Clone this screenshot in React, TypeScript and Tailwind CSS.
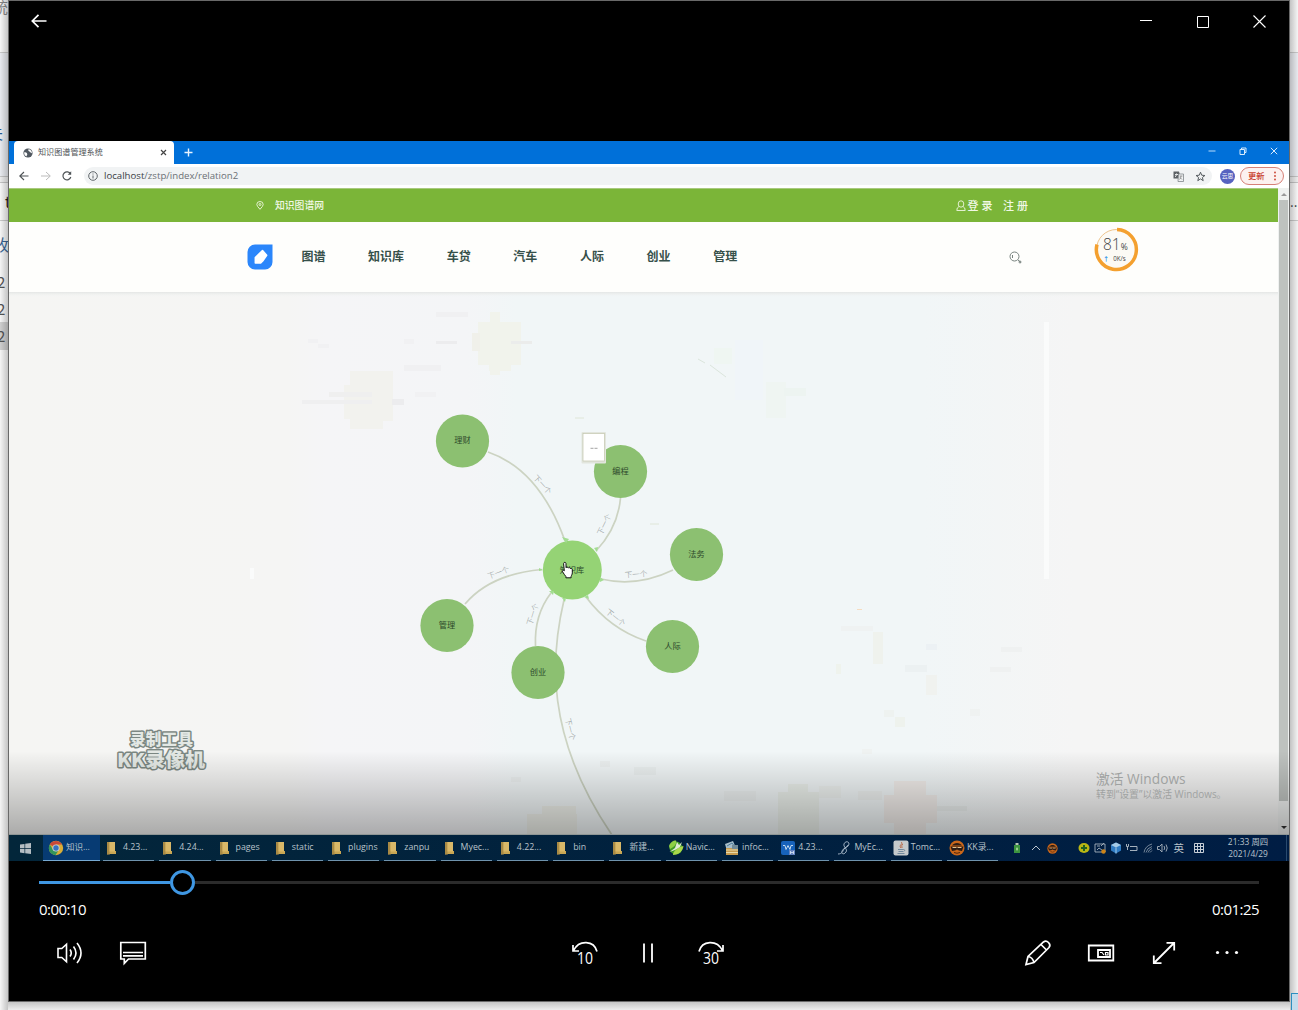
import React from 'react';

const cjk = "font-['Open_Sans','Noto_Sans_CJK_SC',sans-serif]";

const nodes = [
  { x: 462.5, y: 441, t: '理财' },
  { x: 620.5, y: 471.5, t: '编程' },
  { x: 696.5, y: 554.5, t: '法务' },
  { x: 672.5, y: 646.5, t: '人际' },
  { x: 538, y: 672.5, t: '创业' },
  { x: 447, y: 625.5, t: '管理' },
];

const edges = [
  'M488 452Q539.5 469.5 565 541',
  'M620.5 498Q618 527.5 596 551',
  'M673 570Q637 587.5 601 579',
  'M646 641Q610 629 586 597',
  'M535.5 646Q534 615 551 593',
  'M465 604Q490.5 574 542 569.5',
  'M564 600C551 655 544 735 612 835',
];

const edgeLabels = [
  { x: 543, y: 484, r: 48 },
  { x: 603.5, y: 524, r: -64 },
  { x: 498, y: 572, r: -20 },
  { x: 636, y: 573.5, r: -4 },
  { x: 616, y: 617, r: 38 },
  { x: 532, y: 614, r: -72 },
  { x: 571, y: 729, r: 76 },
];

const tints: [number, number, number, number, string][] = [
  [350, 371, 43, 50, '#f2f2ee'], [344, 385, 42, 34, '#f2f2ee'], [350, 419, 33, 10, '#f2f2ee'],
  [478, 322, 43, 43, '#f1f3ec'], [490, 312, 10, 63, '#f1f3ec'], [489, 355, 22, 16, '#f1f3ec'], [472, 333, 8, 18, '#f0f0ea'],
  [302, 400, 70, 4, '#efeff0'], [329, 392, 43, 5, '#efefef'], [392, 399, 12, 6, '#ececee'], [415, 392, 21, 5, '#f1f1f3'],
  [404, 365, 37, 6, '#f0f0f2'], [436, 312, 32, 5, '#f0f0f2'], [436, 341, 21, 3, '#ececee'], [404, 339, 10, 5, '#f1f1f3'],
  [308, 339, 10, 4, '#f1f1f3'], [318, 344, 11, 4, '#f1f1f3'], [511, 341, 21, 3, '#ebeceb'],
  [735, 340, 28, 60, '#f0f5f9'], [714, 348, 18, 16, '#eff6f2'], [766, 382, 20, 36, '#eff5f2'], [784, 388, 22, 8, '#edf4f1'],
  [841, 626, 32, 5, '#eff2f2'], [873, 632, 10, 32, '#eff2ed'], [926, 644, 11, 6, '#ecf1f4'], [905, 665, 22, 7, '#ecf1f2'],
  [926, 675, 11, 20, '#f0f2ef'], [990, 667, 21, 5, '#eff1f1'], [1001, 647, 21, 5, '#eff1f1'], [884, 710, 10, 7, '#eef2f0'], [895, 717, 10, 10, '#eef2ed'],
  [836, 664, 5, 10, '#eff3ed'], [970, 709, 10, 7, '#eff2f1'], [862, 749, 10, 5, '#eff2f1'],
  [778, 792, 41, 42, '#ebf0eb'], [788, 784, 20, 8, '#ebf0eb'], [894, 781, 32, 53, '#f1edea'], [884, 795, 53, 28, '#f1edea'],
  [634, 767, 22, 8, '#ebf0f0'], [724, 791, 32, 10, '#edf1f1'], [819, 786, 22, 12, '#eef2f0'], [542, 806, 34, 28, '#eef0ea'], [527, 814, 50, 20, '#eef0ea'],
  [511, 777, 10, 5, '#edf1f1'], [600, 761, 10, 6, '#ecf0f0'], [858, 791, 24, 9, '#eef1f0'], [937, 806, 30, 5, '#ebefee'],
];

function Graph() {
  return (
    <svg className="block h-[542px] w-[1269px]" viewBox="9 292 1269 542">
      <defs>
        <linearGradient id="canvas" x1="0" x2="1" y1="0" y2="0">
          <stop offset="0" stopColor="#f5f5f3" />
          <stop offset="0.22" stopColor="#f5f5f4" />
          <stop offset="0.25" stopColor="#f5f5f7" />
          <stop offset="0.36" stopColor="#f4f5f7" />
          <stop offset="0.4" stopColor="#f1f6f7" />
          <stop offset="0.72" stopColor="#f1f6f7" />
          <stop offset="0.84" stopColor="#f5f5f5" />
          <stop offset="1" stopColor="#f5f5f4" />
        </linearGradient>
        <linearGradient id="headShade" x1="0" x2="0" y1="0" y2="1">
          <stop offset="0" stopColor="#e4e6e5" />
          <stop offset="1" stopColor="#f3f5f4" stopOpacity="0" />
        </linearGradient>
      </defs>
      <rect x="9" y="292" width="1269" height="542" fill="url(#canvas)" />
      <rect x="9" y="292" width="1269" height="5" fill="url(#headShade)" />
      <rect x="1044" y="322" width="5" height="257" fill="#fafbfb" />
      <rect x="250" y="568" width="4" height="11" fill="#fafbfb" />
      {tints.map(([x, y, w, h, c], i) => (
        <rect key={i} x={x} y={y} width={w} height={h} fill={c} />
      ))}
      <path d="M698 359l7 4M710 365l16 12" stroke="#dbe5dc" strokeWidth="1" fill="none" />
      <path d="M575 418h9M650 524h9" stroke="#dfe6d8" strokeWidth="1" />
      <path d="M857 609.500h5" stroke="#f6dcc0" strokeWidth="1" />
      <g fill="none" stroke="#ccd3c2" strokeWidth="1.7">
        {edges.map((d) => <path key={d} d={d} />)}
      </g>
      {edgeLabels.map((l) => (
        <text key={l.r} transform={`translate(${l.x} ${l.y}) rotate(${l.r})`} textAnchor="middle" dominantBaseline="central" className="fill-[#858c8c] font-['Noto_Sans_CJK_SC',sans-serif] text-[7.5px] font-light">下一个</text>
      ))}
      {nodes.map((n) => (
        <g key={n.t}>
          <circle cx={n.x} cy={n.y} r="26.6" fill="#8cc071" />
          <text x={n.x} y={n.y + 2.4} textAnchor="middle" className="fill-[#2c4a2b] font-['Noto_Sans_CJK_SC',sans-serif] text-[8.2px]">{n.t}</text>
        </g>
      ))}
      <circle cx="572.3" cy="570" r="29.5" fill="#95d375" />
      <path d="M562 537l7 2-3 4zM594 548l4-1-1 5zM600 577l4 3-4 2zM584 597l4-2 1 4zM549 591l5 0-1 4zM562 598l4 0-1 4zM539 568l4 2-4 1z" fill="#a3dd92" />
      <text x="572" y="572.5" textAnchor="middle" className="fill-[#2c4a2b] font-['Noto_Sans_CJK_SC',sans-serif] text-[8.2px]">知识库</text>
      <path d="M563.6 563.6c0-1.7 2.4-1.700 2.400 0v4.200c.5-.9 2-.8 2.300.2.700-.7 1.900-.4 2.100.5.800-.3 1.900.1 1.900 1.200v3c0 2-.9 2.600-1.200 3.700v1.400h-5.200v-1.300c-.8-1.200-2.400-2.900-3.300-4.700-.6-1.300.7-2 1.700-1z" fill="#fff" stroke="#111" strokeWidth="1" />
      <rect x="581.500" y="432" width="24.500" height="31.500" fill="#e2e5dd" rx="1" />
      <rect x="583" y="433.500" width="21.500" height="27.500" fill="#fff" stroke="#c2c7ad" strokeWidth="0.7" />
      <path d="M590.500 448.300h3M594.500 448.300h3" stroke="#999" strokeWidth="0.9" />
      <g className="font-['Noto_Sans_CJK_SC',sans-serif] font-black" fill="#e3e8e4" stroke="#7b8782" strokeWidth="3" strokeLinejoin="round" style={{ paintOrder: 'stroke' }}>
        <text x="130" y="745" fontSize="15.5" textLength="63">录制工具</text>
        <text x="117" y="766.500" fontSize="19" textLength="88" lengthAdjust="spacingAndGlyphs">KK录像机</text>
      </g>
    </svg>
  );
}

const Folder = () => (
  <svg className="h-4 w-4" viewBox="0 0 16 16"><path d="M2 2h8v9h1v3H3v1l-1-1z" fill="#c9a653" /><path d="M2 2h2.500v13L2 14z" fill="#a98a45" /><path d="M4.500 2H10v9.500H4.500z" fill="#d9b868" /></svg>
);

const Chrome = () => (
  <svg className="h-4 w-4" viewBox="0 0 16 16"><circle cx="8" cy="8" r="7.2" fill="#d9ae37" /><path d="M8 8 1.800 4.400A7.200 7.200 0 0 1 14.200 4.600H8z" fill="#c8493b" /><path d="M1.800 4.400A7.200 7.200 0 0 0 7.500 15.200L11 9.500 8 11.400 5 9.700z" fill="#33955a" /><circle cx="8" cy="8" r="3.6" fill="#c9d2d6" /><circle cx="8" cy="8" r="2.7" fill="#3572c2" /></svg>
);

const Kk = ({ cls = 'h-4 w-4' }: { cls?: string }) => (
  <svg className={cls} viewBox="0 0 16 16"><circle cx="8" cy="8" r="7.5" fill="#c9661a" /><path d="M3 5.500C5 2 11 2 13 5.500z" fill="#2b1c15" /><path d="M1.500 6.500h13L13 11l-3-.5-2-1-2 1-3 .5z" fill="#2b1c15" /><path d="M3.500 7.500h4M8.500 7.500h4" stroke="#e8bf8a" /><path d="M5 12.500q3 1.500 6 0" stroke="#53260c" fill="none" /></svg>
);

const appIcons: Record<string, React.ReactNode> = {
  navicat: <svg className="h-4 w-4" viewBox="0 0 16 16"><circle cx="8" cy="8" r="6.5" fill="#3f9a25" /><path d="M1 6c1-3.500 4-5.500 7-5.500 1 3-1 6-6 8.500z" fill="#8fcf45" /><path d="M5 15c0-4 5-8 10.500-9-.5 5-5 9-10.500 9z" fill="#a9d84a" /><path d="M1.500 12 7 8l2-6 2 3 3-3-2 5-5 3z" fill="#e0ead5" /></svg>,
  infoc: <svg className="h-4 w-4" viewBox="0 0 16 16"><path d="M1 4 9 1l3 7-9 3z" fill="#a7bdca" /><path d="m3 6 5-3 3 4" stroke="#4c7a99" fill="none" /><path d="M2 8h12v7H2z" fill="#c79b51" /><path d="M2 10h12M2 12.500h12" stroke="#e8d8a6" /><path d="M8 5h6v4H8z" fill="#738b98" /></svg>,
  wps: <svg className="h-4 w-4" viewBox="0 0 16 16"><rect x="1" y="1" width="14" height="14" rx="2" fill="#1762bb" /><path d="M3 5.500h2l1 4 2-4 2 4 1-4h2" stroke="#bfd7ee" fill="none" /><path d="M9 10h6v5H9z" fill="#6683bf" /><path d="M10.500 11v3M13.500 11v3M10.500 12.500h3" stroke="#d9e4f3" strokeWidth=".8" /></svg>,
  myec: <svg className="h-4 w-4" viewBox="0 0 16 16"><path d="M2 14c4 0 5-3 6-5s5-2 5-5-4-3-5 0 4 5 2 8-5 2-4-1 5-3 6-6" stroke="#aebdcd" strokeWidth=".9" fill="none" /></svg>,
  tomc: <svg className="h-4 w-4" viewBox="0 0 16 16"><rect x=".5" y=".5" width="15" height="15" rx="2" fill="#c5c9cb" /><path d="M8 2c3 2-3 3 0 6M10 4c-2 1-1 2-1 4" stroke="#b86b4b" fill="none" /><path d="M5 9.500h5.500c2 0 1 2 0 2M5.500 11.500h4.500M4.500 13.500h7" stroke="#5d7890" strokeWidth=".8" fill="none" /></svg>,
  kk: <Kk />,
};

const tasks: [string, string][] = [
  ['', '4.23...'], ['', '4.24...'], ['', 'pages'], ['', 'static'], ['', 'plugins'], ['', 'zanpu'], ['', 'Myec...'], ['', '4.22...'], ['', 'bin'], ['', '新建...'],
  ['navicat', 'Navic...'], ['infoc', 'infoc...'], ['wps', '4.23...'], ['myec', 'MyEc...'], ['tomc', 'Tomc...'], ['kk', 'KK录...'],
];

function Taskbar() {
  return (
    <div className={`flex h-[26px] items-stretch bg-gradient-to-r from-[#03263a] via-[#01213e] to-[#001d44] text-[8.8px] text-[#b9c3cb] ${cjk}`}>
      <div className="flex w-[34px] items-center pl-[11px]">
        <svg className="h-[11px] w-[11px]" viewBox="0 0 11 11" fill="#b5bdc2"><path d="M0 1.500 4.500.9v4.300H0zM5.200.8 11 0v5.200H5.200zM0 5.900h4.500v4.300L0 9.600zM5.200 5.900H11V11l-5.800-.8z" /></svg>
      </div>
      <div className="mr-[3px] flex w-[57px] items-center border-b border-[#76a9d2] bg-[#073b73] pl-[5px]"><Chrome /><span className="ml-[2px] text-[8.5px]">知识...</span></div>
      {tasks.map(([icon, label], i) => (
        <div key={i} className="mr-[4.97px] flex w-[51.3px] shrink-0 items-center whitespace-nowrap border-b border-[#6f93ad] pl-[2px]">
          {icon ? appIcons[icon] : <Folder />}
          <span className="ml-[2px] leading-none">{label}</span>
        </div>
      ))}
      <div className="ml-[6px] flex items-center">
        <svg className="h-3 w-4" viewBox="0 0 16 12"><path d="M5 3h6v8H5z" fill="#3d9440" /><path d="M6.500 1h3v2h-3z" fill="#b9c6b5" /><path d="m7 7 1-2 1 2-1 2z" fill="#b6e29e" /></svg>
        <svg className="ml-[3px] h-3 w-4" viewBox="0 0 16 12"><path d="m4 8 4-4 4 4" stroke="#bcc4ce" fill="none" /></svg>
        <div className="flex w-4 justify-center"><Kk cls="h-[11px] w-[11px]" /></div>
        <svg className="ml-[16px] h-3 w-4" viewBox="0 0 16 12"><ellipse cx="8" cy="6" rx="5.5" ry="5" fill="#b9b714" /><path d="M8 3v6M5 6h6" stroke="#236320" strokeWidth="2" /></svg>
        <svg className="h-3 w-4" viewBox="0 0 16 12"><path d="M3 2h10v8H3zM5 4h3M5 8l2-2 3 2M9 4l3-3" stroke="#b9c3cb" strokeWidth=".8" fill="none" /><circle cx="11.500" cy="9.500" r="2.2" fill="#cd8418" /></svg>
        <svg className="h-3 w-4" viewBox="0 0 16 12"><path d="m8 .5 5 2.500v5.500L8 11.500 3 8.500V3z" fill="#2f7cc4" /><path d="m3 3 5 2.500L13 3 8 .5z" fill="#a4cbe8" /><path d="M8 5.500v6" stroke="#a4cbe8" /></svg>
        <svg className="h-3 w-4" viewBox="0 0 16 12" stroke="#a4b0bc" fill="none"><path d="M6 4.500h7v4H6M2.500 2v2.500h2V2M3.500 5v3" /></svg>
        <svg className="h-3 w-4" viewBox="0 0 16 12" stroke="#7e8ea0" strokeWidth=".9" fill="none"><path d="M4 10.500q1-6.500 8-8.500M6 10.500q1-4.500 6-6M8 10.500q1-3 4-4M10 10.500l2-2" /></svg>
        <svg className="-ml-px h-3 w-4" viewBox="0 0 16 12" stroke="#9aa6b3" fill="none"><path d="M2.500 4.500h2L7 2v8L4.500 7.500h-2zM9 4q1.500 2 0 4M11 2.500q2.500 3.500 0 7" /></svg>
        <span className="w-[15px] text-center text-[10.5px] leading-none">英</span>
        <svg className="ml-[5px] h-3 w-4" viewBox="0 0 16 12" stroke="#c5cdd5" fill="none"><path d="M3.500 1.500h9v9h-9zM3.500 4.500h9M3.500 7.500h9M6.500 1.500v9M9.500 1.500v9" /></svg>
      </div>
      <div className="ml-auto mr-[14px] flex w-[48px] flex-col items-center justify-center whitespace-nowrap pb-px text-[8.4px] leading-[11.5px]"><span>21:33 周四</span><span>2021/4/29</span></div>
      <div className="w-[3px] border-l border-[#294a6e]" />
    </div>
  );
}

function BrowserChrome() {
  return (
    <div className={cjk}>
      <div className="flex h-[23px] bg-[#0070d9] pl-[5px]">
        <div className="flex w-[160px] items-center rounded-t-[4px] bg-white pl-[9px] pr-[7px]">
          <svg className="h-[10px] w-[10px]" viewBox="0 0 10 10"><circle cx="5" cy="5" r="4.6" fill="#515961" /><path d="M1 4.500q2-.5 3 .8T3.200 8.500Q1 7 1 4.500zM5.500 1.300q-.8 1.700.5 2T8.200 5.200L9 4.500Q8.300 1.500 5.500 1.300z" fill="#fff" /></svg>
          <span className="ml-[5px] text-[8.1px] text-[#4d5256]">知识图谱管理系统</span>
          <svg className="ml-auto h-[7px] w-[7px]" viewBox="0 0 7 7"><path d="m1 1 5 5M6 1 1 6" stroke="#444" strokeWidth="1.2" /></svg>
        </div>
        <svg className="ml-[10px] mt-[7px] h-[9px] w-[9px]" viewBox="0 0 9 9"><path d="M4.500.5v8M.5 4.500h8" stroke="#e8f3ff" strokeWidth="1.4" /></svg>
        <div className="ml-auto mr-[11px] flex items-center gap-[23px] pb-[4px]">
          <svg className="h-2 w-2" viewBox="0 0 8 8"><path d="M.5 4h7" stroke="#b9dcfb" /></svg>
          <svg className="h-2 w-2" viewBox="0 0 8 8" fill="none" stroke="#d9ecfd"><path d="M1 2.500h4.500v5H1zM2.500 2.500V1H7v4.500H5.500" /></svg>
          <svg className="h-2 w-2" viewBox="0 0 8 8"><path d="m.8.8 6.400 6.400M7.200.8.8 7.200" stroke="#d9ecfd" /></svg>
        </div>
      </div>
      <div className="flex h-[24px] items-center bg-white pl-[9px] pr-[5px]">
        <svg className="h-3 w-3" viewBox="0 0 12 12" fill="none" stroke="#4e5356" strokeWidth="1.1"><path d="M10.500 6H1.800M6 2 1.800 6 6 10" /></svg>
        <svg className="ml-[10px] h-3 w-3" viewBox="0 0 12 12" fill="none" stroke="#bbb"><path d="M1 6h9M6 2l4.300 4L6 10" /></svg>
        <svg className="ml-[9px] h-3 w-3" viewBox="0 0 12 12" fill="none" stroke="#4e5356" strokeWidth="1.2"><path d="M9.500 4A4 4 0 1 0 9.800 7" /><path d="M10.200 1.200v3.500H6.700z" fill="#4e5356" stroke="none" /></svg>
        <div className="ml-[11px] flex h-[18px] w-[1128px] items-center rounded-full bg-[#f1f3f4] pl-[4px] pr-[6px]">
          <svg className="h-[10px] w-[10px]" viewBox="0 0 10 10" fill="none" stroke="#60666a"><circle cx="5" cy="5" r="4.3" /><path d="M5 4.500v3M5 2.500v1" /></svg>
          <span className="ml-[6px] text-[9.65px] leading-none text-[#6b7074]"><span className="text-[#3b4044]">localhost</span>/zstp/index/relation2</span>
          <svg className="ml-auto h-[11px] w-[11px]" viewBox="0 0 11 11"><path d="M.5.500h5.500l2 7H.5z" fill="#5c6165" /><path d="M5.500 3h5v7.500H5z" fill="#f1f3f4" stroke="#82878a" strokeWidth=".8" /><path d="M2 3.500h3M3.500 2.500v1Q3 5.500 2 6" stroke="#e7e8e8" fill="none" /><path d="M6.500 5h3M8 5q0 2-1.500 3.500M7 6.500l2 2" stroke="#777" strokeWidth=".7" fill="none" /></svg>
          <svg className="ml-[11px] h-[11px] w-[11px]" viewBox="0 0 11 11"><path d="m5.500 1.200 1.200 3 3.200.3-2.500 2 .8 3.200-2.700-1.800-2.700 1.800.8-3.200-2.500-2 3.200-.3z" fill="none" stroke="#555b5f" /></svg>
        </div>
        <div className="ml-[8px] flex h-[15px] w-[15px] items-center justify-center whitespace-nowrap rounded-full bg-[#5763c0] text-[5.8px] text-white">云思</div>
        <div className="ml-auto flex h-[18px] w-[44px] items-center rounded-full border border-[#d68077] bg-[#fcf1f0] pl-[7px] text-[8.3px] font-medium text-[#c9402f]">
          更新
          <svg className="ml-auto mr-[6px] h-[10px] w-[4px]" viewBox="0 0 4 10" fill="#c9402f"><circle cx="2" cy="1.5" r=".9" /><circle cx="2" cy="5" r=".9" /><circle cx="2" cy="8.5" r=".9" /></svg>
        </div>
      </div>
    </div>
  );
}

function SiteHeader() {
  return (
    <div className={cjk}>
      <div className="flex h-[34px] items-center border-t border-[#a9c97f] bg-[#7bb538] pl-[247px] pr-[247px] font-medium text-[#f1f8e6]">
        <svg className="h-[9px] w-[8px]" viewBox="0 0 8 9" fill="none" stroke="#e3f0cf"><path d="M4 8.300Q.8 5 .8 3.500a3.200 3 0 0 1 6.400 0Q7.200 5 4 8.300z" /><circle cx="4" cy="3.5" r="1" /></svg>
        <span className="ml-[11px] text-[9.8px] leading-none">知识图谱网</span>
        <svg className="ml-auto h-[12px] w-[10px]" viewBox="0 0 10 12" fill="none" stroke="#e3f0cf"><ellipse cx="5" cy="4" rx="2.8" ry="3.2" /><path d="M3 6.500Q.7 7.500.8 10.500h8.400Q9.300 7.500 7 6.500" /></svg>
        <span className="ml-[2px] text-[11px] leading-none tracking-[3px]">登录</span>
        <span className="ml-[7.5px] text-[11px] leading-none tracking-[3px]">注册</span>
      </div>
      <div className="relative flex h-[70px] items-center bg-[#fefefc] pl-[238px]">
        <svg className="h-[26px] w-[26px]" viewBox="0 0 26 26"><path d="M8 .5h17.500V18a7.500 7.500 0 0 1-7.500 7.500H8A7.500 7.500 0 0 1 .5 18V8A7.500 7.500 0 0 1 8 .5z" fill="#2b86fb" /><path d="m15.500 6.500 4.200 4.800-4 5.700-2 2H8.300v-5.500z" fill="#fff" stroke="#fff" strokeWidth="1.5" strokeLinejoin="round" /></svg>
        <div className="ml-[28.5px] flex gap-[42.6px] text-[12px] font-bold leading-none text-[#36504a]">
          {['图谱', '知识库', '车贷', '汽车', '人际', '创业', '管理'].map((t) => <span key={t}>{t}</span>)}
        </div>
        <svg className="ml-[272px] h-[13px] w-[13px]" viewBox="0 0 13 13" fill="none" stroke="#78837f"><circle cx="5.5" cy="5.5" r="4.5" /><path d="M3.500 4v3M9 9l3 2.500" /><circle cx="11" cy="11" r="1" /></svg>
        <div className="absolute left-[1085px] top-[5px] h-[45px] w-[45px]">
          <svg className="absolute inset-0 h-[45px] w-[45px]" viewBox="0 0 45 45" fill="none"><circle cx="22.5" cy="22.5" r="20" fill="#fcfaf5" stroke="#eec48d" /><path d="M23 2.500A20 20 0 1 1 3 17.500" stroke="#f4a02f" strokeWidth="3.5" /></svg>
          <div className="relative flex items-baseline pl-[9px] pt-[7px] font-light leading-[20px] text-[#454545]"><span className="text-[15.5px]">81</span><span className="text-[8.5px] font-normal">%</span></div>
          <div className="relative -mt-[2px] whitespace-nowrap pl-[9px] text-[6.2px] leading-[8px] text-[#444]"><span className="mr-[4px] font-bold text-[#2d8fe5]">↑</span>0K/s</div>
        </div>
      </div>
    </div>
  );
}

function Player() {
  const ic = 'h-[30px] w-[30px]';
  const cell = 'flex h-12 w-[63px] items-center justify-center';
  return (
    <div className="flex h-[140px] flex-col bg-black font-['Open_Sans',sans-serif] text-white">
      <div className="mt-[9px] flex h-[25px] items-center px-[30px]">
        <div className="h-[3px] w-[131px] bg-[#3f97e3]" />
        <div className="h-[25px] w-[25px] rounded-full border-[3px] border-[#3f97e3]" />
        <div className="h-[3px] flex-1 bg-[#2b2b2b]" />
      </div>
      <div className="mt-[3px] flex h-[22px] items-center justify-between px-[30px] text-[15px] tracking-[-0.55px]"><span>0:00:10</span><span>0:01:25</span></div>
      <div className="mt-[8.5px] flex items-center pl-[29.5px] pr-[30.5px]">
        <div className={cell}><svg className={ic} viewBox="0 0 30 30" fill="none" stroke="#fff" strokeWidth="1.6"><path d="M3 10.500h3.800l4.700-4.300v17.600l-4.700-4.300H3zM15 11.500q2.500 3.500 0 7M18.500 8.500q5 6.500 0 13M22 5q8 10 0 20" /></svg></div>
        <div className={cell}><svg className={ic} viewBox="0 0 30 30" fill="none" stroke="#fff" strokeWidth="1.7"><path d="M2.800 4.500h24.500v16.500H10.500l-4.200 4.300v-4.300H2.800zM5 14.500h20M5 17.800h20" /></svg></div>
        <div className="ml-[389px] flex">
          <div className={cell}><svg className={ic} viewBox="0 0 30 30" fill="none" stroke="#fff" strokeWidth="1.7"><path d="M27 13.500C24 2 9 1.500 3.500 12.500M3 7v6h6" /><text x="15" y="26" textAnchor="middle" fontSize="15.5" textLength="16" lengthAdjust="spacingAndGlyphs" fill="#fff" stroke="none">10</text></svg></div>
          <div className={cell}><svg className={ic} viewBox="0 0 30 30" stroke="#fff" strokeWidth="1.8"><path d="M11 5.500v19M19 5.500v19" /></svg></div>
          <div className={cell}><svg className={ic} viewBox="0 0 30 30" fill="none" stroke="#fff" strokeWidth="1.7"><path d="M3 13.500C6 2 21 1.500 26.500 12.500M27 7v6h-6" /><text x="15" y="26" textAnchor="middle" fontSize="15.5" textLength="16" lengthAdjust="spacingAndGlyphs" fill="#fff" stroke="none">30</text></svg></div>
        </div>
        <div className="ml-auto flex">
          <div className={cell}><svg className={ic} viewBox="0 0 30 30" fill="none" stroke="#fff" strokeWidth="1.7"><path d="m3 26.500 2-8L20.500 4q2.500-2 5 .5t.5 5L11 24.500zM5 18.500q4.500.5 6 6M18 6.500l5.500 5.500" /></svg></div>
          <div className={cell}><svg className={ic} viewBox="0 0 30 30" fill="none" stroke="#fff" strokeWidth="1.8"><path d="M2.800 7.500h24.500v15H2.800z" /><path d="M12 12h12v7H12z" /><path d="M14 14.500h2l2 2.500M19.500 14.500H22v2.500h-2.500z" strokeWidth="1.2" /></svg></div>
          <div className={cell}><svg className={ic} viewBox="0 0 30 30" fill="none" stroke="#fff" strokeWidth="1.8"><path d="M5 25 25 5M17.500 4.800h7.700v7.700M4.800 17.500v7.700h7.700" /></svg></div>
          <div className={cell}><svg className={ic} viewBox="0 0 30 30" fill="#fff"><circle cx="5.5" cy="14.5" r="1.6" /><circle cx="15" cy="14.5" r="1.6" /><circle cx="24.5" cy="14.5" r="1.6" /></svg></div>
        </div>
      </div>
    </div>
  );
}

function Stripe({ children }: { children?: React.ReactNode }) {
  return (
    <>
      <div className="h-[53px] border-b border-[#c8c8c8] bg-[#f5f5f5]" />
      <div className="h-[123px] bg-[#e8eaef]" />
      <div className="h-[7px] border-y border-[#c3c3c3] bg-[#ececec]" />
      <div className="h-[38px] border-b border-[#c8c8c8] bg-[#f6f6f6]" />
      {children}
    </>
  );
}

const peeks: [string, string][] = [
  ['统', 'top-[-3px] left-[-7px] text-[15px] text-[#888]'],
  ['夫', 'top-[123px] left-[-12px] text-[15px] text-[#245a93]'],
  ['t', 'top-[192px] left-[5px] text-[15px] text-[#222]'],
  ['收', 'top-[234px] left-[-7px] text-[16px] text-[#3a6594]'],
  ['2', 'top-[272px] left-[-3px] text-[15px] text-[#555]'],
  ['2', 'top-[299px] left-[-3px] text-[15px] text-[#555]'],
  ['2', 'top-[326px] left-[-3px] text-[15px] text-[#555]'],
];

export default function App() {
  return (
    <div className="flex h-[1010px] w-[1298px] overflow-hidden bg-[#f0f0f0]">
      <div className="relative h-full w-2 shrink-0 overflow-hidden font-['Noto_Sans_CJK_SC',sans-serif]">
        <Stripe>
          <div className="h-[101px] bg-[#f5f5f5]" />
          <div className="h-[28px] bg-[#cfcfcf]" />
          <div className="h-[660px] bg-[#f5f5f5]" />
        </Stripe>
        {peeks.map(([t, c], i) => <span key={i} className={`absolute leading-[20px] ${c}`}>{t}</span>)}
        <div className="absolute inset-0 bg-gradient-to-r from-black/0 to-black/20" />
      </div>
      <div className="flex h-full w-[1282px] shrink-0 flex-col">
        <div className="flex h-[1002px] flex-col border border-[#696969] bg-black">
          <div className="flex h-10 items-center pl-[22px] pr-[23px]">
            <svg className="h-4 w-4" viewBox="0 0 16 16" fill="none" stroke="#fff" strokeWidth="1.7"><path d="M15.500 8H1.500M7.500 1.800 1.300 8l6.200 6.200" /></svg>
            <svg className="ml-auto mr-[44px] h-[13px] w-[13px]" viewBox="0 0 13 13" shapeRendering="crispEdges"><path d="M.5 5.500h12" stroke="#fff" /></svg>
            <svg className="mr-[44px] h-[13px] w-[13px]" viewBox="0 0 13 13" fill="none" stroke="#fff"><path d="M1.500 1.500h11v11h-11z" /></svg>
            <svg className="h-[13px] w-[13px]" viewBox="0 0 13 13" stroke="#fff" strokeWidth="1.1"><path d="m.5.5 12 12M12.500.5l-12 12" /></svg>
          </div>
          <div className="mt-[100px]"><BrowserChrome /></div>
          <div className="relative flex h-[647px]">
            <div className="w-[1269px]">
              <SiteHeader />
              <Graph />
            </div>
            <div className="flex w-[11px] flex-col items-center bg-[#eff1f0]">
              <svg className="mt-[4px] h-[5px] w-[6px]" viewBox="0 0 6 5"><path d="M0 4 3 1l3 3z" fill="#999" /></svg>
              <div className="mt-[3px] h-[601px] w-[9px] bg-[#bec2bf]" />
              <svg className="mt-[24px] h-[5px] w-[6px]" viewBox="0 0 6 5"><path d="M0 1h6L3 4z" fill="#333" /></svg>
            </div>
            <div className="absolute bottom-0 left-0 h-[84px] w-full border-b border-[#8f9695] bg-gradient-to-b from-black/0 to-black/30" />
            <div className="absolute bottom-[33px] left-[1087px] whitespace-nowrap font-['Open_Sans','Noto_Sans_CJK_SC',sans-serif] text-[#9fa2a1]">
              <div className="text-[13.7px] leading-[17px] tracking-[0.05px]">激活 Windows</div>
              <div className="text-[9.9px] leading-[15px]">转到“设置”以激活 Windows。</div>
            </div>
          </div>
          <Taskbar />
          <Player />
        </div>
        <div className="h-2 bg-gradient-to-b from-[#c5c5c5] to-[#eeeeee]" />
      </div>
      <div className="relative h-full w-2 shrink-0 overflow-hidden">
        <Stripe><div className="h-[789px] bg-[#f3f3f3]" /></Stripe>
        <div className="absolute inset-0 bg-gradient-to-l from-black/0 to-black/20" />
        <span className="absolute left-0 top-[192px] font-['Open_Sans',sans-serif] text-[14px] leading-[20px] text-[#444]">...</span>
        <div className="absolute left-px top-[993px] h-[20px] w-[10px] border border-[#2d8fc0] bg-[#c4dceb]" />
      </div>
    </div>
  );
}
